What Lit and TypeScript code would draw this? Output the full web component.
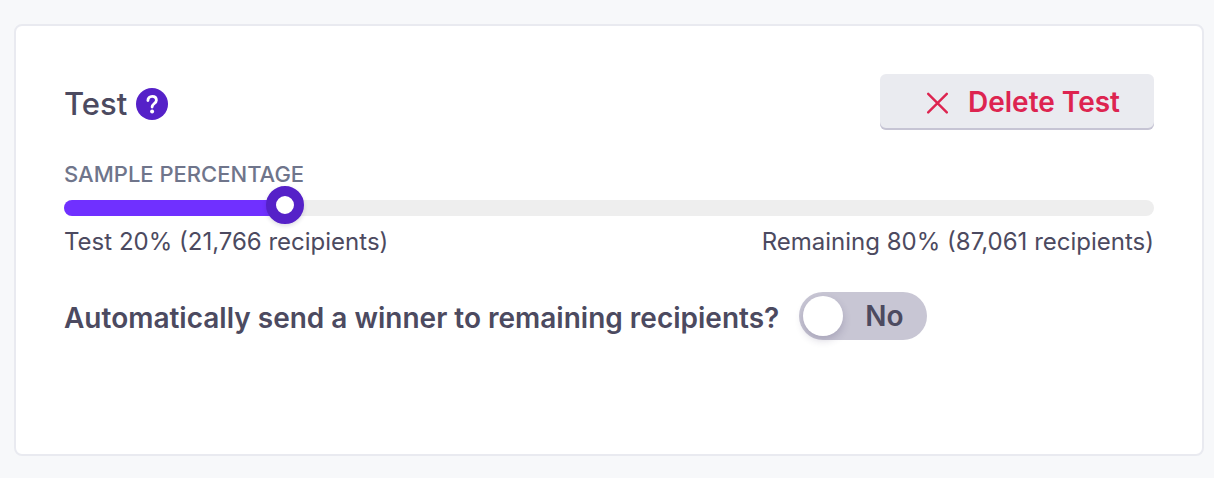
import { LitElement, html, css } from "lit";
import { customElement, state } from "lit/decorators.js";

const TOTAL = 108827;

@customElement("app-root")
export class AppRoot extends LitElement {
  @state() private sample = 20;
  @state() private auto = false;

  static styles = css`
    :host {
      display: block;
      min-height: 100vh;
      box-sizing: border-box;
      padding: 24px 10px 22px 14px;
      background: #f7f8fa;
      font-family: Inter, sans-serif;
      color: #4c4a60;
    }
    * { box-sizing: border-box; }
    button, input { font-family: inherit; cursor: pointer; }
    .card {
      background: #fff;
      border: 2px solid #e9eaf0;
      border-radius: 8px;
      padding: 48px 48px 114px;
    }
    .head { display: flex; justify-content: space-between; align-items: flex-start; }
    .title { display: flex; align-items: center; gap: 9px; height: 60px; }
    h2 { margin: 0; font-size: 31px; line-height: 40px; font-weight: 500; }
    .help { width: 32px; height: 32px; padding: 0; border: 0; background: none; }
    .help svg, .delete svg { display: block; }
    .delete {
      display: flex;
      align-items: center;
      gap: 20px;
      height: 56px;
      padding: 0 34px 0 46px;
      border: 0;
      border-radius: 6px;
      background: #eaebf0;
      box-shadow: inset 0 -2px #c6c4d4;
      color: #dd2450;
      font-size: 28px;
      line-height: 32px;
      font-weight: 600;
    }
    .delete svg { margin-top: 2px; }
    .caption {
      display: block;
      margin-top: 26px;
      font-size: 22px;
      line-height: 28px;
      font-weight: 500;
      color: #6f758b;
      text-transform: uppercase;
    }
    .slider { display: grid; align-items: center; margin-top: -2px; }
    .track, .range { grid-area: 1 / 1; }
    .track { height: 16px; margin-top: 6px; border-radius: 8px; background: #eee; overflow: hidden; }
    .fill { height: 100%; background: #7030ff; }
    .range { appearance: none; height: 38px; margin: 0 -14px; background: none; }
    .range::-webkit-slider-thumb {
      appearance: none;
      width: 38px;
      height: 38px;
      border: 10px solid #5521c8;
      border-radius: 50%;
      background: #fff;
      box-shadow: 0 2px 4px rgba(40, 30, 80, 0.16);
    }
    .legend {
      display: flex;
      justify-content: space-between;
      margin-top: 2px;
      font-size: 24px;
      line-height: 32px;
    }
    .auto {
      display: flex;
      align-items: center;
      gap: 20px;
      margin-top: 34px;
      font-size: 28px;
      line-height: 44px;
      font-weight: 600;
    }
    .question { padding-top: 4px; }
    .switch { display: grid; align-items: center; width: 128px; height: 48px; }
    .switch input, .state { grid-area: 1 / 1; }
    .switch input {
      appearance: none;
      display: flex;
      width: 100%;
      height: 100%;
      margin: 0;
      padding: 4px;
      border-radius: 24px;
      background: #c8c6d4;
    }
    .switch input::before {
      content: "";
      width: 40px;
      height: 40px;
      border-radius: 50%;
      background: #fff;
      box-shadow: 0 4px 8px rgba(40, 30, 80, 0.2);
    }
    .switch input:checked { justify-content: flex-end; background: #7030ff; }
    .state { padding-left: 66px; pointer-events: none; }
    .switch input:checked + .state { padding-left: 20px; color: #fff; }
  `;

  private onSlide(e: Event) {
    this.sample = Number((e.target as HTMLInputElement).value);
  }

  private onToggle(e: Event) {
    this.auto = (e.target as HTMLInputElement).checked;
  }

  render() {
    const test = Math.ceil((TOTAL * this.sample) / 100);
    const fmt = (n: number) => n.toLocaleString("en-US");
    return html`
      <section class="card">
        <div class="head">
          <div class="title">
            <h2>Test</h2>
            <button class="help" type="button" aria-label="Help">
              <svg width="32" height="32" viewBox="0 0 32 32" fill="none">
                <circle cx="16" cy="16" r="16" fill="#5521c8" />
                <path d="M11.9 12.6C11.9 10 13.7 8.3 16.2 8.3C18.7 8.3 20.4 9.9 20.4 12.2C20.4 15.5 16.1 15.6 16.1 19.1" stroke="#fff" stroke-width="2.8" stroke-linecap="round" />
                <circle cx="16.1" cy="23.5" r="2" fill="#fff" />
              </svg>
            </button>
          </div>
          <button class="delete" type="button">
            <svg width="22" height="22" viewBox="0 0 22 22" fill="none" stroke="currentColor" stroke-width="2.4" stroke-linecap="round" aria-hidden="true">
              <path d="M2.2 1.8L20.8 20.4M20.8 1.8L2.2 20.4" />
            </svg>
            <span>Delete Test</span>
          </button>
        </div>
        <label class="caption" for="sample">Sample percentage</label>
        <div class="slider">
          <div class="track"><div class="fill" style="width:${this.sample}%"></div></div>
          <input class="range" id="sample" type="range" min="0" max="100" .value=${String(this.sample)} @input=${this.onSlide} />
        </div>
        <div class="legend">
          <span>Test ${this.sample}% (${fmt(test)} recipients)</span>
          <span>Remaining ${100 - this.sample}% (${fmt(TOTAL - test)} recipients)</span>
        </div>
        <div class="auto">
          <label class="question" for="auto">Automatically send a winner to remaining recipients?</label>
          <div class="switch">
            <input id="auto" type="checkbox" role="switch" .checked=${this.auto} @change=${this.onToggle} />
            <span class="state">${this.auto ? "Yes" : "No"}</span>
          </div>
        </div>
      </section>
    `;
  }
}
